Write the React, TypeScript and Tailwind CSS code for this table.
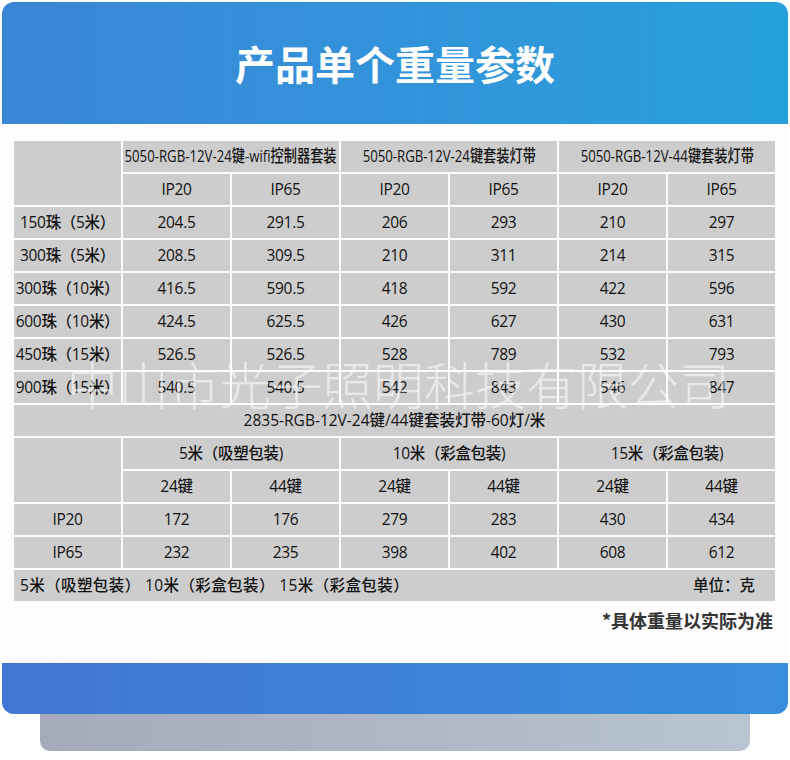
import React from "react";

const cell =
  "bg-[#cdcdcd] h-[31px] flex items-center justify-center text-[15.5px] tracking-[-0.3px] font-medium text-[#121212] leading-none";

const rows1: [string, string[]][] = [
  ["150珠（5米）", ["204.5", "291.5", "206", "293", "210", "297"]],
  ["300珠（5米）", ["208.5", "309.5", "210", "311", "214", "315"]],
  ["300珠（10米）", ["416.5", "590.5", "418", "592", "422", "596"]],
  ["600珠（10米）", ["424.5", "625.5", "426", "627", "430", "631"]],
  ["450珠（15米）", ["526.5", "526.5", "528", "789", "532", "793"]],
  ["900珠（15米）", ["540.5", "540.5", "542", "843", "546", "847"]],
];

const rows2: [string, string[]][] = [
  ["IP20", ["172", "176", "279", "283", "430", "434"]],
  ["IP65", ["232", "235", "398", "402", "608", "612"]],
];

export default function App() {
  return (
    <div
      className="w-[790px] h-[760px] bg-white pt-[2px] px-[2px]"
      style={{ fontFamily: '"Open Sans", "Noto Sans CJK SC", sans-serif' }}
    >
      <div className="w-[786px]">
        {/* Header */}
        <div className="h-[122px] rounded-t-[12px] bg-gradient-to-r from-[#3b86d7] to-[#26a0dc] flex items-center justify-center">
          <h1
            className="text-white text-[40px] font-bold leading-none"
            style={{ fontFamily: '"Noto Sans CJK SC", sans-serif' }}
          >
            产品单个重量参数
          </h1>
        </div>

        {/* Body */}
        <div className="h-[539px] bg-[#fefcfd] pt-[17px] pl-[12px] pr-[13px]">
          <div className="relative">
            <div className="grid grid-cols-[repeat(7,107px)] gap-[2px]">
              <div className="bg-[#cdcdcd] row-span-2" />
              <div className={`${cell} col-span-2`}>
                <span className="inline-block scale-x-[0.8] text-[16.5px] tracking-normal whitespace-nowrap">5050-RGB-12V-24键-wifi控制器套装</span>
              </div>
              <div className={`${cell} col-span-2`}>
                <span className="inline-block scale-x-[0.8] text-[16.5px] tracking-normal whitespace-nowrap">5050-RGB-12V-24键套装灯带</span>
              </div>
              <div className={`${cell} col-span-2`}>
                <span className="inline-block scale-x-[0.8] text-[16.5px] tracking-normal whitespace-nowrap">5050-RGB-12V-44键套装灯带</span>
              </div>
              {["IP20", "IP65", "IP20", "IP65", "IP20", "IP65"].map((t, i) => (
                <div key={i} className={cell}>
                  {t}
                </div>
              ))}
              {rows1.map(([label, vals]) => (
                <React.Fragment key={label}>
                  <div className={cell}>{label}</div>
                  {vals.map((v, i) => (
                    <div key={i} className={cell}>
                      {v}
                    </div>
                  ))}
                </React.Fragment>
              ))}
              <div className={`${cell} col-span-7 tracking-normal`}>2835-RGB-12V-24键/44键套装灯带-60灯/米</div>
              <div className="bg-[#cdcdcd] row-span-2" />
              <div className={`${cell} col-span-2`}>5米（吸塑包装)</div>
              <div className={`${cell} col-span-2`}>10米（彩盒包装)</div>
              <div className={`${cell} col-span-2`}>15米（彩盒包装)</div>
              {["24键", "44键", "24键", "44键", "24键", "44键"].map((t, i) => (
                <div key={i} className={cell}>
                  {t}
                </div>
              ))}
              {rows2.map(([label, vals]) => (
                <React.Fragment key={label}>
                  <div className={cell}>{label}</div>
                  {vals.map((v, i) => (
                    <div key={i} className={cell}>
                      {v}
                    </div>
                  ))}
                </React.Fragment>
              ))}
              <div className={`${cell} col-span-7 !justify-between px-[6px]`}>
                <span className="whitespace-pre tracking-[0.4px]">5米（吸塑包装） 10米（彩盒包装） 15米（彩盒包装）</span>
                <span className="pr-[14px] tracking-normal">单位：克</span>
              </div>
            </div>
            {/* Watermark */}
            <div
              className="absolute left-[53px] top-[217px] text-[51px] leading-none text-white/55 font-light whitespace-nowrap pointer-events-none"
              style={{ fontFamily: '"Noto Sans CJK SC", sans-serif' }}
            >
              中山市光子照明科技有限公司
            </div>
          </div>
          <div className="flex justify-end pt-[10px] pr-[2px]">
            <span
              className="text-[18px] font-bold text-[#333333] leading-none"
              style={{ fontFamily: '"Noto Sans CJK SC", sans-serif' }}
            >
              *具体重量以实际为准
            </span>
          </div>
        </div>

        {/* Footer */}
        <div className="h-[51px] rounded-b-[12px] bg-gradient-to-r from-[#4276d4] to-[#398edb]" />
        <div className="mx-[38px] h-[37px] rounded-b-[10px] bg-gradient-to-r from-[#a4aaba] to-[#b8c4d0]" />
      </div>
    </div>
  );
}
